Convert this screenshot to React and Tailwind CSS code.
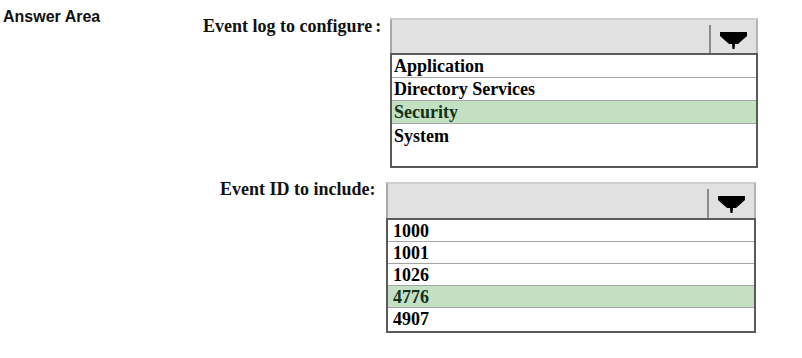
import React from 'react';

const serif = { fontFamily: '"Liberation Serif", "Times New Roman", serif' };

const Arrow = () => (
    <svg width="28" height="18" viewBox="0 0 28 18">
        <polygon points="0,0 27,0 27,4 18,12 15,12 14.5,17 12.5,17 12,12 9,12 0,4" fill="#000" />
    </svg>
);

const Dropdown = ({ options, selected, width, headerH, rowH, listH, pad }) => (
    <div className={ width }>
        {/* closed select header */ }
        <div className={ `flex ${ headerH } bg-[#e1e1e1] border-t-2 border-l-2 border-r-2 border-t-[#cfcfcf] border-l-[#a9a9a9] border-r-[#b5b5b5]` }>
            <div className="flex-1" />
            <div className="w-[2px] mt-[5px] bg-[#8a8a8a]" />
            <div className="w-[45px] flex items-start justify-center pt-[12px]">
                <Arrow />
            </div>
        </div>
        {/* open list */ }
        <div className={ `${ listH } bg-white border-2 border-[#5a5a5a]` }>
            { options.map((o, i) => (
                <div
                    key={ o }
                    className={ `${ rowH } ${ pad } flex items-center text-[18px] font-bold leading-none ${ i < options.length - 1 ? 'border-b border-[#a6a6a6]' : '' } ${ o === selected ? 'bg-[#c3e0c3] text-[#12301a]' : 'text-black' }` }
                >
                    { o }
                </div>
            )) }
        </div>
    </div>
);

export default function App() {
    return (
        <div className="flex w-[802px] h-[358px] bg-white overflow-hidden">
            <div className="w-[203px] pl-[3px] pt-[7px]">
                <div className="text-[16px] leading-[20px] font-bold text-[#111]" style={ { fontFamily: '"Liberation Sans", Arial, sans-serif' } }>
                    Answer Area
                </div>
            </div>
            <div className="flex flex-col pt-[14px]" style={ serif }>
                <div className="flex items-start">
                    <div className="w-[187px] text-[18px] leading-[24px] font-bold text-[#111]">
                        Event log to configure<span className="ml-[3px]">:</span>
                    </div>
                    <div className="mt-[4px]">
                        <Dropdown
                            options={ ['Application', 'Directory Services', 'Security', 'System'] }
                            selected="Security"
                            width="w-[368px]"
                            headerH="h-[35px]"
                            rowH="h-[23px]"
                            listH="h-[115px]"
                            pad="pl-[2px]"
                        />
                    </div>
                </div>
                <div className="flex items-start mt-[9px]">
                    <div className="w-[183px] pl-[17px] text-[18px] leading-[24px] font-bold text-[#111]">
                        Event ID to include:
                    </div>
                    <div className="mt-[5px]">
                        <Dropdown
                            options={ ['1000', '1001', '1026', '4776', '4907'] }
                            selected="4776"
                            width="w-[370px]"
                            headerH="h-[36px]"
                            rowH="h-[22px]"
                            listH="h-[115px]"
                            pad="pl-[5px]"
                        />
                    </div>
                </div>
            </div>
        </div>
    );
}
